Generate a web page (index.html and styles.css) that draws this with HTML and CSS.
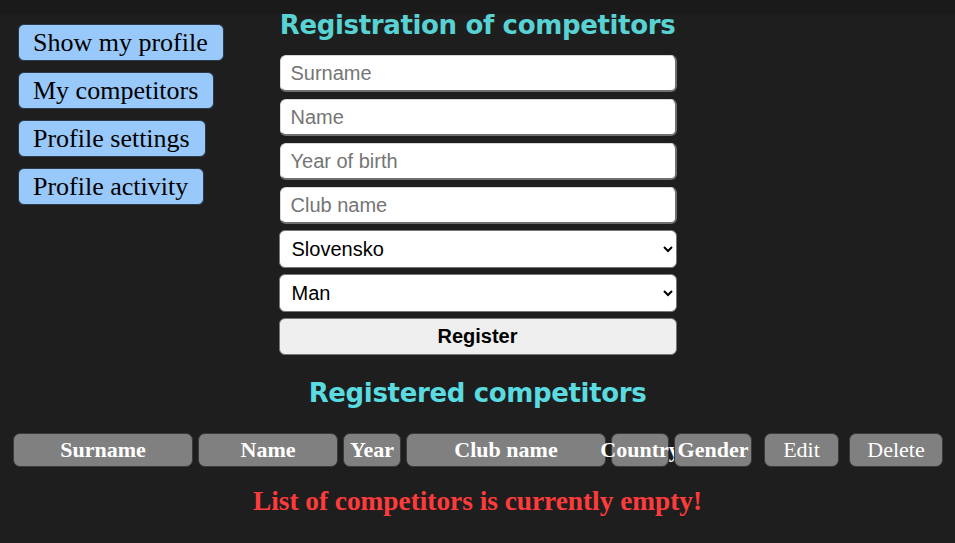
FILE: index.html
```html
<!DOCTYPE html>
<html lang="en">
<head>
<meta charset="utf-8">
<title>Registration of competitors</title>
<link rel="stylesheet" href="styles.css">
</head>
<body>
<div class="layout">
  <nav class="sidebar">
    <button class="nav-btn">Show my profile</button>
    <button class="nav-btn">My competitors</button>
    <button class="nav-btn">Profile settings</button>
    <button class="nav-btn">Profile activity</button>
  </nav>
  <main class="form-col">
    <h1 class="title">Registration of competitors</h1>
    <form class="reg-form">
      <input class="field" type="text" placeholder="Surname">
      <input class="field" type="text" placeholder="Name">
      <input class="field" type="text" placeholder="Year of birth">
      <input class="field" type="text" placeholder="Club name">
      <select class="field sel"><option>Slovensko</option></select>
      <select class="field sel"><option>Man</option></select>
      <button type="button" class="register">Register</button>
    </form>
    <h2 class="title sub">Registered competitors</h2>
  </main>
  <div class="spacer"></div>
</div>
<div class="table-head">
  <div class="th w-surname">Surname</div>
  <div class="th w-name">Name</div>
  <div class="th w-year">Year</div>
  <div class="th w-club">Club name</div>
  <div class="th w-country">Country</div>
  <div class="th w-gender">Gender</div>
  <div class="th light w-edit">Edit</div>
  <div class="th light w-delete">Delete</div>
</div>
<p class="empty">List of competitors is currently empty!</p>
</body>
</html>
```
FILE: styles.css
```css
html, body {
  margin: 0;
  padding: 0;
}
body {
  background: linear-gradient(#1a1a1a 0, #1a1a1a 14px, #1e1e1e 14px);
  background-color: #1e1e1e;
  min-height: 543px;
  font-family: "Liberation Serif", serif;
}
.layout {
  display: grid;
  grid-template-columns: 1fr 398px 1fr;
}
.sidebar {
  display: flex;
  flex-direction: column;
  align-items: flex-start;
  gap: 11px;
  padding: 24px 0 0 18px;
}
.nav-btn {
  font-family: "Liberation Serif", serif;
  font-size: 26px;
  color: #000;
  background: #99c9fa;
  border: 1px solid #2a3a4a;
  border-radius: 6px;
  height: 37px;
  padding: 0 15px 0 14px;
  line-height: 35px;
}
.form-col {
  display: flex;
  flex-direction: column;
  align-items: stretch;
}
.title {
  margin: 10px 0 14px;
  font-family: "DejaVu Sans", Verdana, sans-serif;
  font-weight: bold;
  font-size: 26px;
  line-height: 31px;
  color: #58d2d2;
  text-align: center;
  white-space: nowrap;
  letter-spacing: -0.35px;
}
.title.sub {
  margin: 21px 0 0;
  line-height: 34px;
  color: #5adbe0;
}
.reg-form {
  display: flex;
  flex-direction: column;
  gap: 7px;
}
.field {
  box-sizing: border-box;
  height: 37px;
  margin: 0 0 0 1px;
  width: 397px;
  font-family: "Liberation Sans", Arial, sans-serif;
  font-size: 20px;
  padding: 0 10px;
  background: #fff;
  color: #000;
  border: 1px solid #d8d8d8;
  border-right: 2px solid #6f6f6f;
  border-bottom: 2px solid #6f6f6f;
  border-radius: 6px;
  outline: none;
}
.field::placeholder {
  color: #757575;
}
.sel {
  height: 38px;
  margin: -1px 0 0 0;
  width: 398px;
  padding: 0 6px 0 8px;
  border: 1px solid #777;
  border-radius: 6px;
}
.register {
  box-sizing: border-box;
  height: 37px;
  width: 398px;
  margin-top: -1px;
  font-family: "Liberation Sans", Arial, sans-serif;
  font-weight: bold;
  font-size: 20px;
  background: #efefef;
  color: #000;
  border: 1px solid #767676;
  border-radius: 6px;
}
.table-head {
  display: flex;
  margin: 23px 0 0 13px;
}
.th {
  box-sizing: border-box;
  height: 34px;
  display: flex;
  align-items: center;
  justify-content: center;
  background: #808080;
  color: #fff;
  font-weight: bold;
  font-size: 22px;
  border: 1px solid #3a3a3a;
  border-radius: 7px;
  margin-right: 5px;
  white-space: nowrap;
  overflow: visible;
}
.th.light {
  font-weight: normal;
}
.w-surname { width: 180px; }
.w-name { width: 140px; }
.w-year { width: 58px; }
.w-club { width: 200px; }
.w-country { width: 58px; }
.w-gender { width: 78px; margin-right: 12px; }
.w-edit { width: 75px; margin-right: 10px; }
.w-delete { width: 94px; }
.empty {
  margin: 19px 0 0;
  text-align: center;
  color: #ff3b3b;
  font-weight: bold;
  font-size: 27.3px;
  line-height: 30px;
}
```
